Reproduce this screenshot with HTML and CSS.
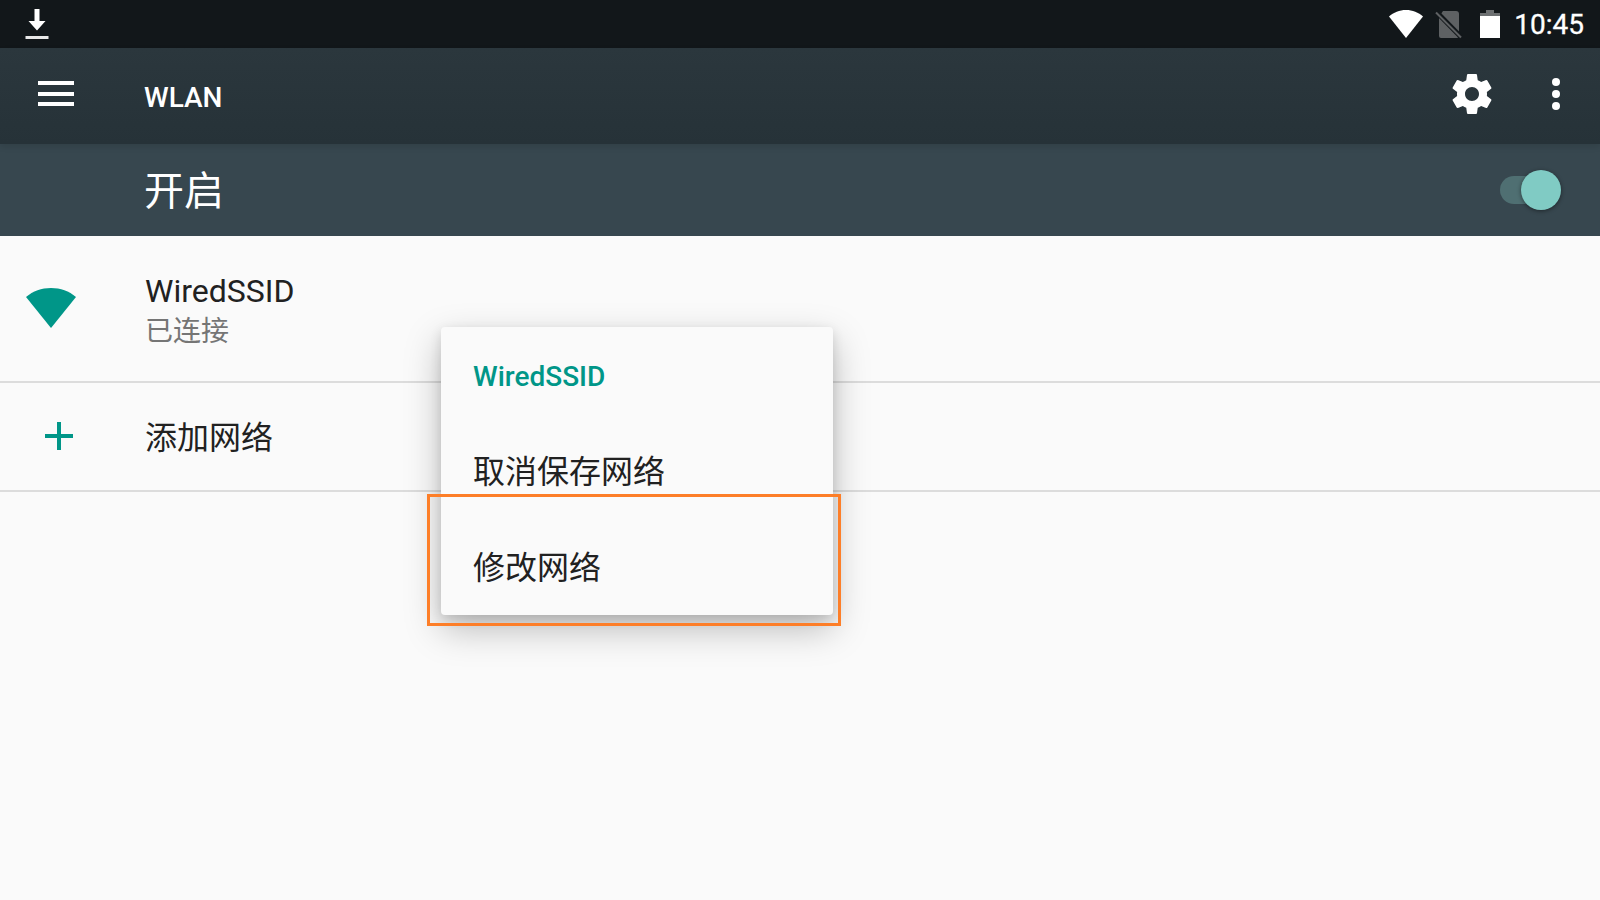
FILE: index.html
```html
<!DOCTYPE html>
<html lang="zh-CN">
<head>
  <meta charset="UTF-8">
  <title>WLAN</title>
  <link rel="stylesheet" href="styles.css">
</head>
<body>
  <div class="status-bar">
    <svg class="ic-download" width="24" height="32" viewBox="0 0 24 32">
      <path d="M9.5 0h5v12h6L12 21.500 3.500 12h6z" fill="#fff"/>
      <rect x="0.500" y="27" width="23" height="3" fill="#e8e8e8"/>
    </svg>
    <div class="status-right">
      <svg width="36" height="30" viewBox="0 0 36 30">
        <path d="M18 29 1 7.500C5.500 3.500 11.500 1 18 1s12.500 2.500 17 6.500z" fill="#fff"/>
      </svg>
      <svg class="ic-sim" width="28" height="30" viewBox="0 0 28 30">
        <path d="M8 2h13a3 3 0 0 1 3 3v22a2 2 0 0 1-2 2H6a2 2 0 0 1-2-2V8z" fill="#5e6163"/>
        <path d="M1.500 3 27 29" stroke="#12171a" stroke-width="5"/>
        <path d="M1 3.500 26 28.500" stroke="#5e6163" stroke-width="2"/>
      </svg>
      <svg class="ic-battery" width="20" height="30" viewBox="0 0 20 30">
        <path d="M6 1h8v3h6v4H0V4h6z" fill="#6c6f71"/>
        <rect y="7" width="20" height="22" fill="#fff"/>
      </svg>
      <span class="clock">10:45</span>
    </div>
  </div>

  <div class="toolbar">
    <div class="hamburger"><span></span><span></span><span></span></div>
    <div class="toolbar-title">WLAN</div>
    <svg class="ic-gear" width="48" height="48" viewBox="0 0 24 24">
      <path fill="#fff" d="M19.430 12.980c.04-.32.07-.64.07-.98s-.03-.66-.07-.98l2.110-1.650c.19-.15.240-.42.120-.64l-2-3.460c-.12-.22-.39-.3-.61-.22l-2.490 1c-.52-.4-1.080-.73-1.690-.98l-.38-2.650C14.460 2.180 14.250 2 14 2h-4c-.25 0-.46.180-.49.420l-.38 2.650c-.61.250-1.170.59-1.690.98l-2.490-1c-.23-.09-.49 0-.61.220l-2 3.460c-.13.220-.07.490.12.640l2.110 1.650c-.04.320-.07.650-.07.980s.03.660.07.980l-2.110 1.650c-.19.150-.24.420-.12.640l2 3.460c.12.220.39.300.61.220l2.490-1c.52.400 1.080.730 1.690.980l.38 2.650c.03.240.24.420.49.420h4c.25 0 .46-.18.49-.42l.38-2.650c.61-.25 1.170-.59 1.690-.98l2.490 1c.23.090.49 0 .61-.22l2-3.460c.12-.22.070-.49-.12-.64l-2.110-1.650zM12 15.500c-1.930 0-3.500-1.570-3.500-3.500s1.570-3.500 3.500-3.500 3.500 1.570 3.500 3.500-1.570 3.500-3.500 3.500z"/>
    </svg>
    <div class="overflow"><span></span><span></span><span></span></div>
  </div>

  <div class="switch-bar">
    <div class="switch-label">开启</div>
    <div class="switch"><div class="switch-thumb"></div></div>
  </div>

  <div class="list">
    <div class="row row-network">
      <svg class="row-icon" width="52" height="42" viewBox="0 0 52 42">
        <path d="M26 41 1 10C8 4 16.500 1 26 1s18 3 25 9z" fill="#009688"/>
      </svg>
      <div>
        <div class="net-name">WiredSSID</div>
        <div class="net-status">已连接</div>
      </div>
    </div>
    <div class="row row-add">
      <svg class="row-icon" width="52" height="28" viewBox="0 0 52 28">
        <path d="M32 0h4v12h12v4H36v12h-4V16H20v-4h12z" fill="#009688"/>
      </svg>
      <div class="add-label">添加网络</div>
    </div>
  </div>

  <div class="menu">
    <div class="menu-title">WiredSSID</div>
    <div class="menu-item item-forget">取消保存网络</div>
    <div class="menu-item item-modify">修改网络</div>
  </div>
  <div class="highlight"></div>
</body>
</html>
```

FILE: styles.css
```css
* {
  box-sizing: border-box;
}
body {
  margin: 0;
  width: 1600px;
  height: 900px;
  overflow: hidden;
  position: relative;
  background-color: #fafafa;
  font-family: Roboto, "Noto Sans CJK SC", sans-serif;
  color: #212121;
}
svg {
  display: block;
}

/* Status bar */
.status-bar {
  height: 48px;
  background-color: #12171a;
  display: flex;
  align-items: center;
  justify-content: space-between;
  padding-left: 25px;
  padding-right: 16px;
}
.ic-download {
  margin-top: 1px;
}
.status-right {
  display: flex;
  align-items: center;
}
.ic-sim {
  margin-left: 11px;
}
.ic-battery {
  margin-left: 17px;
}
.clock {
  margin-left: 14px;
  color: #fff;
  font-size: 28px;
  line-height: 48px;
  margin-top: 2px;
  -webkit-text-stroke: 0.3px #fff;
}

/* Toolbar */
.toolbar {
  height: 96px;
  background: linear-gradient(#2b373d, #263238);
  display: flex;
  align-items: center;
  padding-left: 38px;
  position: relative;
  box-shadow: 0 3px 6px rgba(0, 0, 0, 0.1);
}
.hamburger {
  width: 36px;
  margin-top: -5px;
}
.hamburger span {
  display: block;
  height: 4px;
  background-color: #fff;
  margin-bottom: 6.500px;
}
.hamburger span:last-child {
  margin-bottom: 0;
}
.toolbar-title {
  margin-left: 70px;
  color: #fff;
  font-size: 28px;
  font-weight: 500;
  margin-top: 2px;
}
.ic-gear {
  margin-left: auto;
  margin-top: -4px;
}
.overflow {
  width: 8px;
  margin-left: 56px;
  margin-right: 40px;
  margin-top: -4px;
}
.overflow span {
  display: block;
  width: 8px;
  height: 8px;
  border-radius: 50%;
  background-color: #fff;
  margin-bottom: 4px;
}
.overflow span:last-child {
  margin-bottom: 0;
}

/* On/off bar */
.switch-bar {
  height: 92px;
  background-color: #37474f;
  display: flex;
  align-items: center;
  justify-content: space-between;
  padding-left: 144px;
  padding-right: 40px;
}
.switch-label {
  color: #fff;
  font-size: 40px;
  margin-top: -4px;
}
.switch {
  width: 60px;
  height: 28px;
  border-radius: 14px;
  background-color: #4f6f72;
  position: relative;
  margin-top: -1px;
}
.switch-thumb {
  position: absolute;
  right: -1px;
  top: -6px;
  width: 40px;
  height: 40px;
  border-radius: 50%;
  background-color: #80cbc4;
  box-shadow: 0 1px 4px rgba(0, 0, 0, 0.45);
}

/* Network list */
.row {
  display: flex;
  border-bottom: 2px solid #dcdcdc;
}
.row-icon {
  margin-left: 25px;
  margin-right: 68px;
  flex-shrink: 0;
}
.row-network {
  height: 147px;
  padding-top: 51px;
}
.net-name {
  font-size: 32px;
  line-height: 38px;
  margin-top: -15px;
}
.net-status {
  font-size: 28px;
  line-height: 40px;
  margin-top: 2px;
  color: #757575;
}
.row-add {
  height: 109px;
  align-items: center;
}
.row-add .row-icon {
  margin-top: -2px;
}
.add-label {
  font-size: 32px;
  margin-top: -3px;
}

/* Context menu, sits over the list */
.menu {
  position: absolute;
  left: 441px;
  top: 327px;
  width: 392px;
  height: 288px;
  background-color: #fafafa;
  border-radius: 4px;
  box-shadow: 0 14px 36px rgba(0, 0, 0, 0.26), 0 4px 12px rgba(0, 0, 0, 0.12);
  padding-left: 32px;
}
.menu-title {
  color: #009688;
  font-size: 28px;
  font-weight: 500;
  line-height: 36px;
  padding-top: 32px;
  height: 68px;
}
.menu-item {
  font-size: 32px;
  line-height: 46px;
}
.item-forget {
  margin-top: 54px;
}
.item-modify {
  margin-top: 50px;
}

/* Annotation frame */
.highlight {
  position: absolute;
  left: 427px;
  top: 494px;
  width: 414px;
  height: 132px;
  border: 3px solid #fd7e28;
}
```
